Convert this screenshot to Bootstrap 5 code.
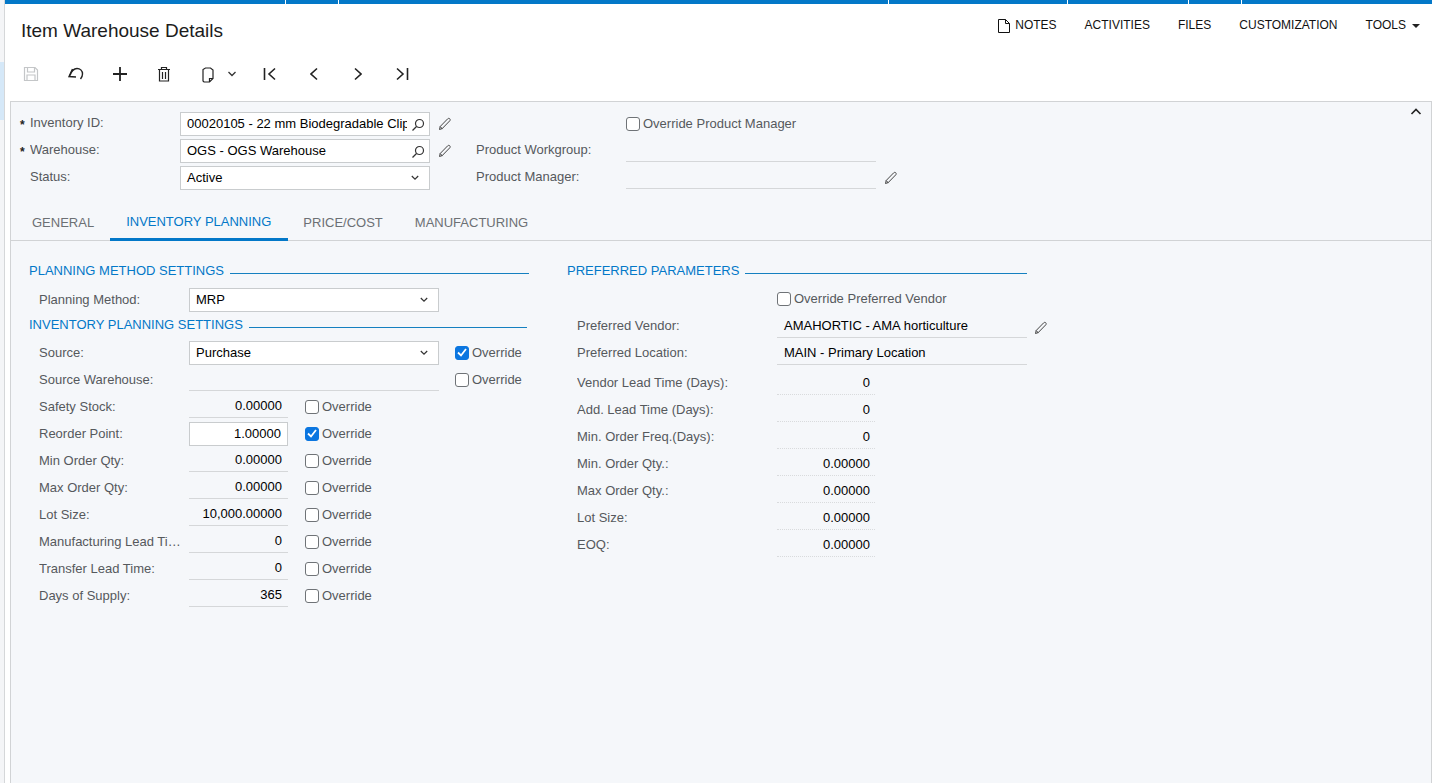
<!DOCTYPE html>
<html lang="en">
<head>
<meta charset="utf-8">
<title>Item Warehouse Details</title>
<link href="https://cdn.jsdelivr.net/npm/bootstrap@5.3.0/dist/css/bootstrap.min.css" rel="stylesheet">
<style>
html,body{height:100%;overflow:hidden}
body{font-family:"Liberation Sans",Arial,sans-serif;font-size:13px;color:#000;background:#fff}
.shell{height:783px;display:flex}
.rail{width:5px;flex:none;border-right:1px solid #d5d7d9;background:#f4f5f7;padding-top:62px}
.rail-mark{height:58px;background:#d5e8f8}
.page{flex:1;min-width:0;display:flex;flex-direction:column}
.topstrip{height:4px;flex:none;background:#0378c8;display:flex}
.topstrip span{border-right:1px solid #fff}
.strip-a{width:281px}.strip-b{width:53px}.strip-c{width:550px}.strip-d{width:179px}.strip-e{width:121px}
.head{height:56px;flex:none;padding:0 12px 0 16px}
.title{font-size:19px;font-weight:400;margin:15px 0 0;line-height:23px;color:#1c1c1c}
.menu{gap:28px;padding-top:14px;font-size:12px;line-height:15px;color:#111;align-items:flex-start}
.menu-notes{display:flex;align-items:center;gap:4px;height:15px}
.caret-s{display:inline-block;border:4px solid transparent;border-top-color:#222;border-bottom:0;margin-left:6px;vertical-align:1px}
.tools{height:41px;flex:none;padding-left:12px;align-items:flex-start}
.tool{width:44px;height:28px;display:flex;align-items:center;justify-content:center}
.tool-save{width:27px;margin-right:10px}
.tool-copy{width:24px;margin-left:10px}
.tool-drop{width:24px}
.tool-first{margin-left:4px}
.panel{flex:1;margin-left:5px;background:#f5f7fa;border:1px solid #d1d3d5;border-bottom:0;position:relative;min-height:0}
.collapse-btn{position:absolute;top:6px;right:9px;line-height:0}
.summary{height:112px;padding:8px 0 0 9px;display:flex}
.fcol{display:flex;flex-direction:column}
.fcol-2{margin-left:24px}
.frow{height:27px;display:flex;align-items:center}
.req{width:10px;flex:none;font-size:12px;font-weight:700;color:#222;line-height:1;padding-top:2px}
.lbl{color:#55595d;font-size:13px;white-space:nowrap;overflow:hidden;text-overflow:ellipsis;flex:none;margin-top:-2px}
.left-col .lbl{margin-top:0}
.inp{height:24px;background:#fff;border:1px solid #c9ccce;display:flex;align-items:center;padding:0 6px;flex:none;font-size:13px;white-space:nowrap;overflow:hidden;position:relative}
.inp.right{justify-content:flex-end}
.ro{height:25px;border-bottom:1px solid #d5d7d9;display:flex;align-items:center;padding:1px 6px 0;flex:none;white-space:nowrap;align-self:flex-start}
.left-col .ro{padding-top:2px}
.ro.right{justify-content:flex-end}
.dot{width:98px;padding-right:5px;border-bottom:1px dotted #d9dbdd}
.w240{width:250px}
.w100{width:99px}
.cuts{overflow:hidden;width:220px;display:block}
.inp svg.end{position:absolute;right:4px;top:5px}
.inp svg.drop{position:absolute;right:10px;top:8px}
.pen{margin-left:8px;flex:none}
.chk{display:flex;align-items:center;gap:3px;color:#55595d;white-space:nowrap;flex:none}
.box{width:14px;height:14px;border:1px solid #6f7377;border-radius:3px;background:#fff;flex:none;display:block}
.box.on{background:#0b76e0;border-color:#0b76e0;display:flex;align-items:center;justify-content:center}
.tabsbar{height:36px;border-bottom:1px solid #d1d3d5;display:flex;padding-left:5px;align-items:stretch;margin-top:-9px}
.tabx{padding:2px 16px 0;color:#6c7074;display:flex;align-items:center;font-size:13px;border-bottom:3px solid transparent;margin-bottom:-1px}
.tabx.act{color:#0378c8;border-bottom-color:#0378c8;padding:0 17px 0 16px}
.tabx.act + .tabx{padding-left:15px}
.body-cols{display:flex;padding:0 0 0 18px}
.sect{display:flex;align-items:center;height:19px;color:#0378c8;font-size:13px;white-space:nowrap}
.sect i{flex:1;height:1px;background:#1580c0;margin-left:6px;margin-top:5px}
.sect-2{width:498px;margin-top:2px;margin-bottom:5px}
.left-col{width:500px;padding-top:20px}
.right-col{width:460px;margin-left:38px;padding-top:20px}
.indent{padding-left:10px}
.l150{width:150px}
.l143{width:143px;margin-right:7px}
.l200{width:200px}
.val-wide{padding-left:7px}
.ovr{margin-left:17px}
.ovr2{margin-left:16px}
.gap-method{margin-top:6px}
.row-override{height:28px;margin-top:5px}
.row-lead{margin-top:3px}
.pen-mgr{margin-left:8px}
.pen-low{margin-top:3px;margin-left:7px}
</style>
</head>
<body>
<svg width="0" height="0" class="position-absolute">
  <defs>
    <symbol id="ico-pen" viewBox="0 0 14 14"><path fill="none" stroke="#444" stroke-width="1" d="M1.500 12.500l.7-3 7.500-7.700c.7-.6 1.600-.6 2.100 0s.5 1.500-.1 2.100l-7.500 7.700z"/><path fill="none" stroke="#444" stroke-width="1" d="M2.200 9.500l2.300 2.600"/></symbol>
    <symbol id="ico-search" viewBox="0 0 14 14"><circle cx="8.500" cy="5.500" r="4" fill="none" stroke="#333" stroke-width="1.200"/><path fill="none" stroke="#333" stroke-width="1.200" d="M5.500 8.500l-4 4"/></symbol>
    <symbol id="ico-drop" viewBox="0 0 8 6"><path fill="none" stroke="#333" stroke-width="1.200" d="M.8 1l3.200 3.200 3.200-3.200"/></symbol>
    <symbol id="ico-tick" viewBox="0 0 10 9"><path fill="none" stroke="#fff" stroke-width="1.800" d="M1 4.500l3 3 5-6.500"/></symbol>
  </defs>
</svg>
<div class="shell">
  <div class="rail"><div class="rail-mark"></div></div>
  <div class="page">
    <div class="topstrip">
      <span class="strip-a"></span><span class="strip-b"></span><span class="strip-c"></span><span class="strip-d"></span><span class="strip-e"></span><span class="strip-b"></span>
    </div>
    <div class="head d-flex justify-content-between">
      <h1 class="title">Item Warehouse Details</h1>
      <div class="menu d-flex">
        <span class="menu-notes"><svg width="14" height="16" viewBox="0 0 14 16" fill="none" stroke="#111" stroke-width="1"><path d="M1.500 1.500h7l4 4v9h-11z"/><path d="M8.500 1.500v4h4"/></svg>NOTES</span>
        <span>ACTIVITIES</span><span>FILES</span><span>CUSTOMIZATION</span><span>TOOLS<i class="caret-s"></i></span>
      </div>
    </div>
    <div class="tools d-flex">
      <span class="tool tool-save"><svg width="16" height="16" viewBox="0 0 16 16" fill="none" stroke="#c4c6c8" stroke-width="1.200"><path d="M1.500 1.500h10.500l2.500 2.500v10.500h-13z"/><path d="M4.500 1.500v4.500h7v-4.500M4 14.500v-5.500h8v5.500"/></svg></span>
      <span class="tool"><svg width="18" height="14" viewBox="0 0 18 14" fill="none" stroke="#222" stroke-width="1.400"><path d="M5.500 2l-3.500 7.500 7 .5"/><path d="M3 8.500c1.500-4.500 4-7 7-7s5.500 2.200 5.500 5.500c0 2-.7 3.500-2 5"/></svg></span>
      <span class="tool"><svg width="16" height="16" viewBox="0 0 16 16" stroke="#222" stroke-width="1.800"><path d="M8 1v14M1 8h14"/></svg></span>
      <span class="tool"><svg width="14" height="16" viewBox="0 0 14 16" fill="none" stroke="#222" stroke-width="1.200"><path d="M1 3.500h12M4.500 3.500v-2h5v2M2.500 3.500v11.500h9v-11.500M5.500 6v7M8.500 6v7"/></svg></span>
      <span class="tool tool-copy"><svg width="14" height="17" viewBox="0 0 14 17" fill="none" stroke="#222" stroke-width="1.200"><path d="M4.500 2h5l2.500 2v8.500l-3.500 3.500h-5.500l-1-1v-11.500z"/><path d="M8.500 16v-3.500h3.500"/></svg></span>
      <span class="tool tool-drop"><svg width="10" height="6" viewBox="0 0 10 6" fill="none" stroke="#333" stroke-width="1.300"><path d="M1.500 1l3.500 3.500 3.500-3.500"/></svg></span>
      <span class="tool tool-first"><svg width="14" height="14" viewBox="0 0 14 14" fill="none" stroke="#222" stroke-width="1.600"><path d="M1.500 1v12M12 1.500l-6 5.500 6 5.500"/></svg></span>
      <span class="tool"><svg width="8" height="14" viewBox="0 0 8 14" fill="none" stroke="#222" stroke-width="1.600"><path d="M7 1.500l-6 5.500 6 5.500"/></svg></span>
      <span class="tool"><svg width="8" height="14" viewBox="0 0 8 14" fill="none" stroke="#222" stroke-width="1.600"><path d="M1 1.500l6 5.500-6 5.500"/></svg></span>
      <span class="tool"><svg width="14" height="14" viewBox="0 0 14 14" fill="none" stroke="#222" stroke-width="1.600"><path d="M12.500 1v12M2 1.500l6 5.500-6 5.500"/></svg></span>
    </div>
    <div class="panel">
      <span class="collapse-btn"><svg width="12" height="8" viewBox="0 0 12 8" fill="none" stroke="#222" stroke-width="1.600"><path d="M1.500 6l4.500-4.500 4.500 4.500"/></svg></span>
      <div class="summary">
        <div class="fcol">
          <div class="frow"><span class="req">*</span><span class="lbl l150">Inventory ID:</span><div class="inp w240"><span class="cuts">00020105 - 22 mm Biodegradable Clip</span><svg class="end" width="14" height="14"><use href="#ico-search"/></svg></div><svg class="pen" width="14" height="14"><use href="#ico-pen"/></svg></div>
          <div class="frow"><span class="req">*</span><span class="lbl l150">Warehouse:</span><div class="inp w240">OGS - OGS Warehouse<svg class="end" width="14" height="14"><use href="#ico-search"/></svg></div><svg class="pen" width="14" height="14"><use href="#ico-pen"/></svg></div>
          <div class="frow"><span class="req"></span><span class="lbl l150">Status:</span><div class="inp w240">Active<svg class="drop" width="8" height="6"><use href="#ico-drop"/></svg></div></div>
        </div>
        <div class="fcol fcol-2">
          <div class="frow"><span class="lbl l150"></span><span class="chk"><i class="box"></i>Override Product Manager</span></div>
          <div class="frow"><span class="lbl l150">Product Workgroup:</span><div class="ro w240"></div></div>
          <div class="frow"><span class="lbl l150">Product Manager:</span><div class="ro w240"></div><svg class="pen pen-mgr" width="14" height="14"><use href="#ico-pen"/></svg></div>
        </div>
      </div>
      <div class="tabsbar">
        <div class="tabx">GENERAL</div><div class="tabx act">INVENTORY PLANNING</div><div class="tabx">PRICE/COST</div><div class="tabx">MANUFACTURING</div>
      </div>
      <div class="body-cols">
        <div class="left-col">
          <div class="sect">PLANNING METHOD SETTINGS<i></i></div>
          <div class="frow indent gap-method"><span class="lbl l150">Planning Method:</span><div class="inp w240">MRP<svg class="drop" width="8" height="6"><use href="#ico-drop"/></svg></div></div>
          <div class="sect sect-2">INVENTORY PLANNING SETTINGS<i></i></div>
          <div class="frow indent"><span class="lbl l150">Source:</span><div class="inp w240">Purchase<svg class="drop" width="8" height="6"><use href="#ico-drop"/></svg></div><span class="chk ovr2"><i class="box on"><svg width="10" height="9"><use href="#ico-tick"/></svg></i>Override</span></div>
          <div class="frow indent"><span class="lbl l150">Source Warehouse:</span><div class="ro w240"></div><span class="chk ovr2"><i class="box"></i>Override</span></div>
          <div class="frow indent"><span class="lbl l150">Safety Stock:</span><div class="ro w100 right">0.00000</div><span class="chk ovr"><i class="box"></i>Override</span></div>
          <div class="frow indent"><span class="lbl l150">Reorder Point:</span><div class="inp w100 right">1.00000</div><span class="chk ovr"><i class="box on"><svg width="10" height="9"><use href="#ico-tick"/></svg></i>Override</span></div>
          <div class="frow indent"><span class="lbl l150">Min Order Qty:</span><div class="ro w100 right">0.00000</div><span class="chk ovr"><i class="box"></i>Override</span></div>
          <div class="frow indent"><span class="lbl l150">Max Order Qty:</span><div class="ro w100 right">0.00000</div><span class="chk ovr"><i class="box"></i>Override</span></div>
          <div class="frow indent"><span class="lbl l150">Lot Size:</span><div class="ro w100 right">10,000.00000</div><span class="chk ovr"><i class="box"></i>Override</span></div>
          <div class="frow indent"><span class="lbl l143">Manufacturing Lead Time (Days):</span><div class="ro w100 right">0</div><span class="chk ovr"><i class="box"></i>Override</span></div>
          <div class="frow indent"><span class="lbl l150">Transfer Lead Time:</span><div class="ro w100 right">0</div><span class="chk ovr"><i class="box"></i>Override</span></div>
          <div class="frow indent"><span class="lbl l150">Days of Supply:</span><div class="ro w100 right">365</div><span class="chk ovr"><i class="box"></i>Override</span></div>
        </div>
        <div class="right-col">
          <div class="sect">PREFERRED PARAMETERS<i></i></div>
          <div class="frow indent row-override"><span class="lbl l200"></span><span class="chk"><i class="box"></i>Override Preferred Vendor</span></div>
          <div class="frow indent"><span class="lbl l200">Preferred Vendor:</span><div class="ro w240 val-wide">AMAHORTIC - AMA horticulture</div><svg class="pen pen-low" width="14" height="14"><use href="#ico-pen"/></svg></div>
          <div class="frow indent"><span class="lbl l200">Preferred Location:</span><div class="ro w240 val-wide">MAIN - Primary Location</div></div>
          <div class="frow indent row-lead"><span class="lbl l200">Vendor Lead Time (Days):</span><div class="ro dot right">0</div></div>
          <div class="frow indent"><span class="lbl l200">Add. Lead Time (Days):</span><div class="ro dot right">0</div></div>
          <div class="frow indent"><span class="lbl l200">Min. Order Freq.(Days):</span><div class="ro dot right">0</div></div>
          <div class="frow indent"><span class="lbl l200">Min. Order Qty.:</span><div class="ro dot right">0.00000</div></div>
          <div class="frow indent"><span class="lbl l200">Max Order Qty.:</span><div class="ro dot right">0.00000</div></div>
          <div class="frow indent"><span class="lbl l200">Lot Size:</span><div class="ro dot right">0.00000</div></div>
          <div class="frow indent"><span class="lbl l200">EOQ:</span><div class="ro dot right">0.00000</div></div>
        </div>
      </div>
    </div>
  </div>
</div>
<script src="https://cdn.jsdelivr.net/npm/bootstrap@5.3.0/dist/js/bootstrap.bundle.min.js"></script>
</body>
</html>
